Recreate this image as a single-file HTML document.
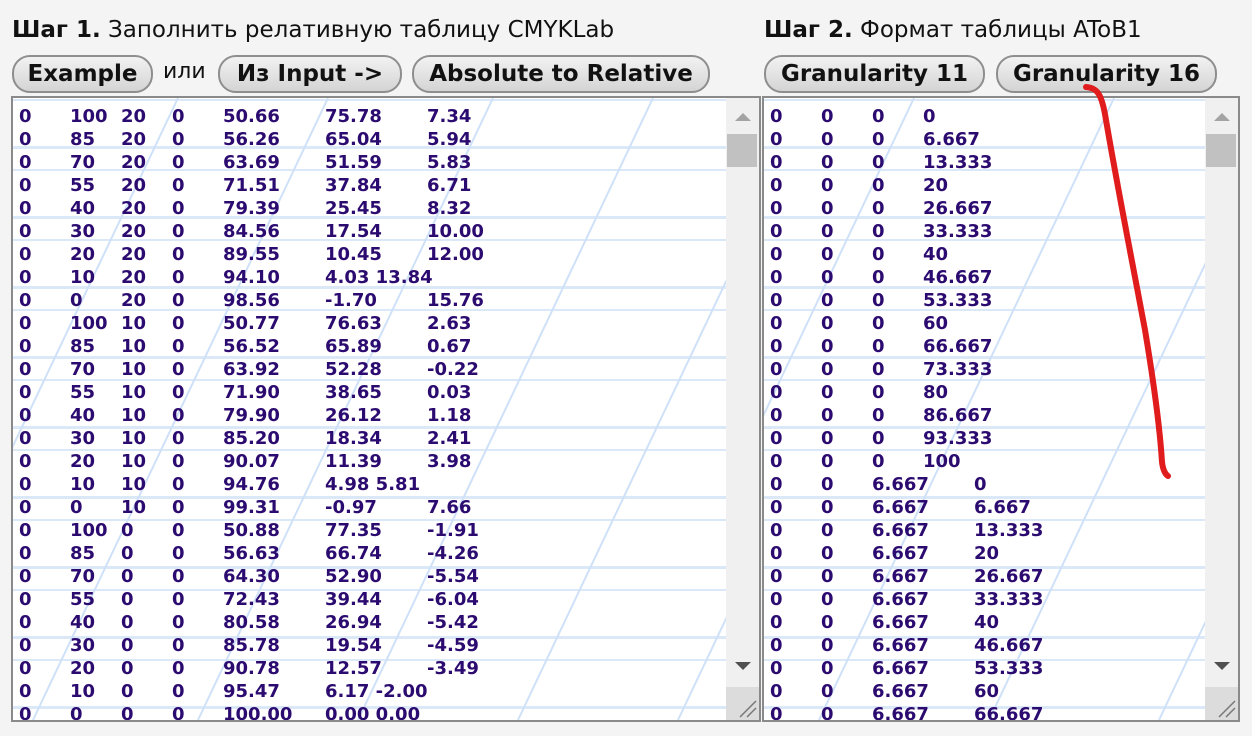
<!DOCTYPE html>
<html><head><meta charset="utf-8"><style>
body{margin:0;width:1252px;height:736px;background:#f4f4f4;font-family:"DejaVu Sans",Verdana,sans-serif;position:relative;overflow:hidden}
.h{position:absolute;top:17px;font-size:23px;color:#111;white-space:nowrap}
.h b{font-weight:bold}
.btn{position:absolute;top:55px;height:34px;border:2px solid #8e8e8e;border-radius:18px;background:linear-gradient(#f2f2f2,#d4d4d4);font-weight:bold;font-size:23px;color:#111;text-align:center;line-height:35px;box-sizing:content-box;white-space:nowrap}
.ili{position:absolute;top:59px;left:163px;font-size:22px;color:#111}
.box{position:absolute;top:96px;height:622px;border:2px solid #8a8a8a;background:#fff;overflow:hidden}
.bg{position:absolute;left:0;top:0}
pre{position:absolute;margin:0;left:6px;top:7px;font-family:"DejaVu Sans",Verdana,sans-serif;font-weight:bold;font-size:18px;line-height:23px;color:#2c0b70;tab-size:51px;-moz-tab-size:51px}
.sb{position:absolute;top:0;right:0;width:33px;height:100%;background:#f0f0f0}
.thumb{position:absolute;left:1px;right:2px;top:36px;height:33px;background:#c1c1c1}
.up,.dn{position:absolute;left:9px;width:0;height:0;border-left:8px solid transparent;border-right:8px solid transparent}
.up{top:15px;border-bottom:8px solid #a3a3a3}
.dn{top:564px;border-top:8px solid #505050}
.corner{position:absolute;bottom:0;right:0;width:33px;height:33px;background:#dcdcdc}
</style></head><body>
<div class="h" style="left:12px"><b>Шаг 1.</b> Заполнить релативную таблицу CMYKLab</div>
<div class="h" style="left:764px"><b>Шаг 2.</b> Формат таблицы AToB1</div>
<div class="btn" style="left:12px;width:137px">Example</div>
<div class="ili">или</div>
<div class="btn" style="left:218px;width:180px">Из Input -&gt;</div>
<div class="btn" style="left:412px;width:294px">Absolute to Relative</div>
<div class="btn" style="left:764px;width:217px">Granularity 11</div>
<div class="btn" style="left:996px;width:217px">Granularity 16</div>

<div class="box" style="left:11px;width:746px">
<svg class="bg" width="746" height="622"><defs><pattern id="p" width="160" height="70" patternUnits="userSpaceOnUse" x="0" y="3"><rect width="160" height="70" fill="#fff"/><rect y="45" width="160" height="3" fill="#dbe8f8"/><rect y="68" width="160" height="2" fill="#dbe8f8"/></pattern></defs><rect width="746" height="622" fill="url(#p)"/>
<g stroke="#cfe1f8" stroke-width="2"><line x1="165" y1="0" x2="-130" y2="622"/><line x1="315" y1="0" x2="20" y2="622"/><line x1="480" y1="0" x2="185" y2="622"/><line x1="640" y1="0" x2="345" y2="622"/><line x1="800" y1="0" x2="505" y2="622"/><line x1="960" y1="0" x2="665" y2="622"/></g></svg>
<pre>0	100	20	0	50.66	75.78	7.34
0	85	20	0	56.26	65.04	5.94
0	70	20	0	63.69	51.59	5.83
0	55	20	0	71.51	37.84	6.71
0	40	20	0	79.39	25.45	8.32
0	30	20	0	84.56	17.54	10.00
0	20	20	0	89.55	10.45	12.00
0	10	20	0	94.10	4.03 13.84
0	0	20	0	98.56	-1.70	15.76
0	100	10	0	50.77	76.63	2.63
0	85	10	0	56.52	65.89	0.67
0	70	10	0	63.92	52.28	-0.22
0	55	10	0	71.90	38.65	0.03
0	40	10	0	79.90	26.12	1.18
0	30	10	0	85.20	18.34	2.41
0	20	10	0	90.07	11.39	3.98
0	10	10	0	94.76	4.98 5.81
0	0	10	0	99.31	-0.97	7.66
0	100	0	0	50.88	77.35	-1.91
0	85	0	0	56.63	66.74	-4.26
0	70	0	0	64.30	52.90	-5.54
0	55	0	0	72.43	39.44	-6.04
0	40	0	0	80.58	26.94	-5.42
0	30	0	0	85.78	19.54	-4.59
0	20	0	0	90.78	12.57	-3.49
0	10	0	0	95.47	6.17 -2.00
0	0	0	0	100.00	0.00 0.00</pre>
<div class="sb"><div class="up"></div><div class="thumb"></div><div class="dn"></div><div class="corner"><svg width="33" height="33"><g stroke="#777" stroke-width="1.5"><line x1="14" y1="30" x2="30" y2="14"/><line x1="21" y1="30" x2="30" y2="21"/></g></svg></div></div>
</div>

<div class="box" style="left:762px;width:474px">
<svg class="bg" width="474" height="622"><rect width="474" height="622" fill="url(#p)"/>
<g stroke="#cfe1f8" stroke-width="2"><line x1="150" y1="0" x2="-145" y2="622"/><line x1="350" y1="0" x2="55" y2="622"/><line x1="520" y1="0" x2="225" y2="622"/><line x1="690" y1="0" x2="395" y2="622"/></g></svg>
<pre>0	0	0	0
0	0	0	6.667
0	0	0	13.333
0	0	0	20
0	0	0	26.667
0	0	0	33.333
0	0	0	40
0	0	0	46.667
0	0	0	53.333
0	0	0	60
0	0	0	66.667
0	0	0	73.333
0	0	0	80
0	0	0	86.667
0	0	0	93.333
0	0	0	100
0	0	6.667	0
0	0	6.667	6.667
0	0	6.667	13.333
0	0	6.667	20
0	0	6.667	26.667
0	0	6.667	33.333
0	0	6.667	40
0	0	6.667	46.667
0	0	6.667	53.333
0	0	6.667	60
0	0	6.667	66.667</pre>
<div class="sb"><div class="up"></div><div class="thumb"></div><div class="dn"></div><div class="corner"><svg width="33" height="33"><g stroke="#777" stroke-width="1.5"><line x1="14" y1="30" x2="30" y2="14"/><line x1="21" y1="30" x2="30" y2="21"/></g></svg></div></div>
</div>

<svg style="position:absolute;left:0;top:0" width="1252" height="736"><path d="M1086 87 C1098 88 1102 95 1106 120 C1118 190 1130 250 1145 330 C1155 390 1160 430 1162 462 C1163 470 1165 474 1168 476" fill="none" stroke="#e01c1c" stroke-width="6" stroke-linecap="round"/></svg>
</body></html>
